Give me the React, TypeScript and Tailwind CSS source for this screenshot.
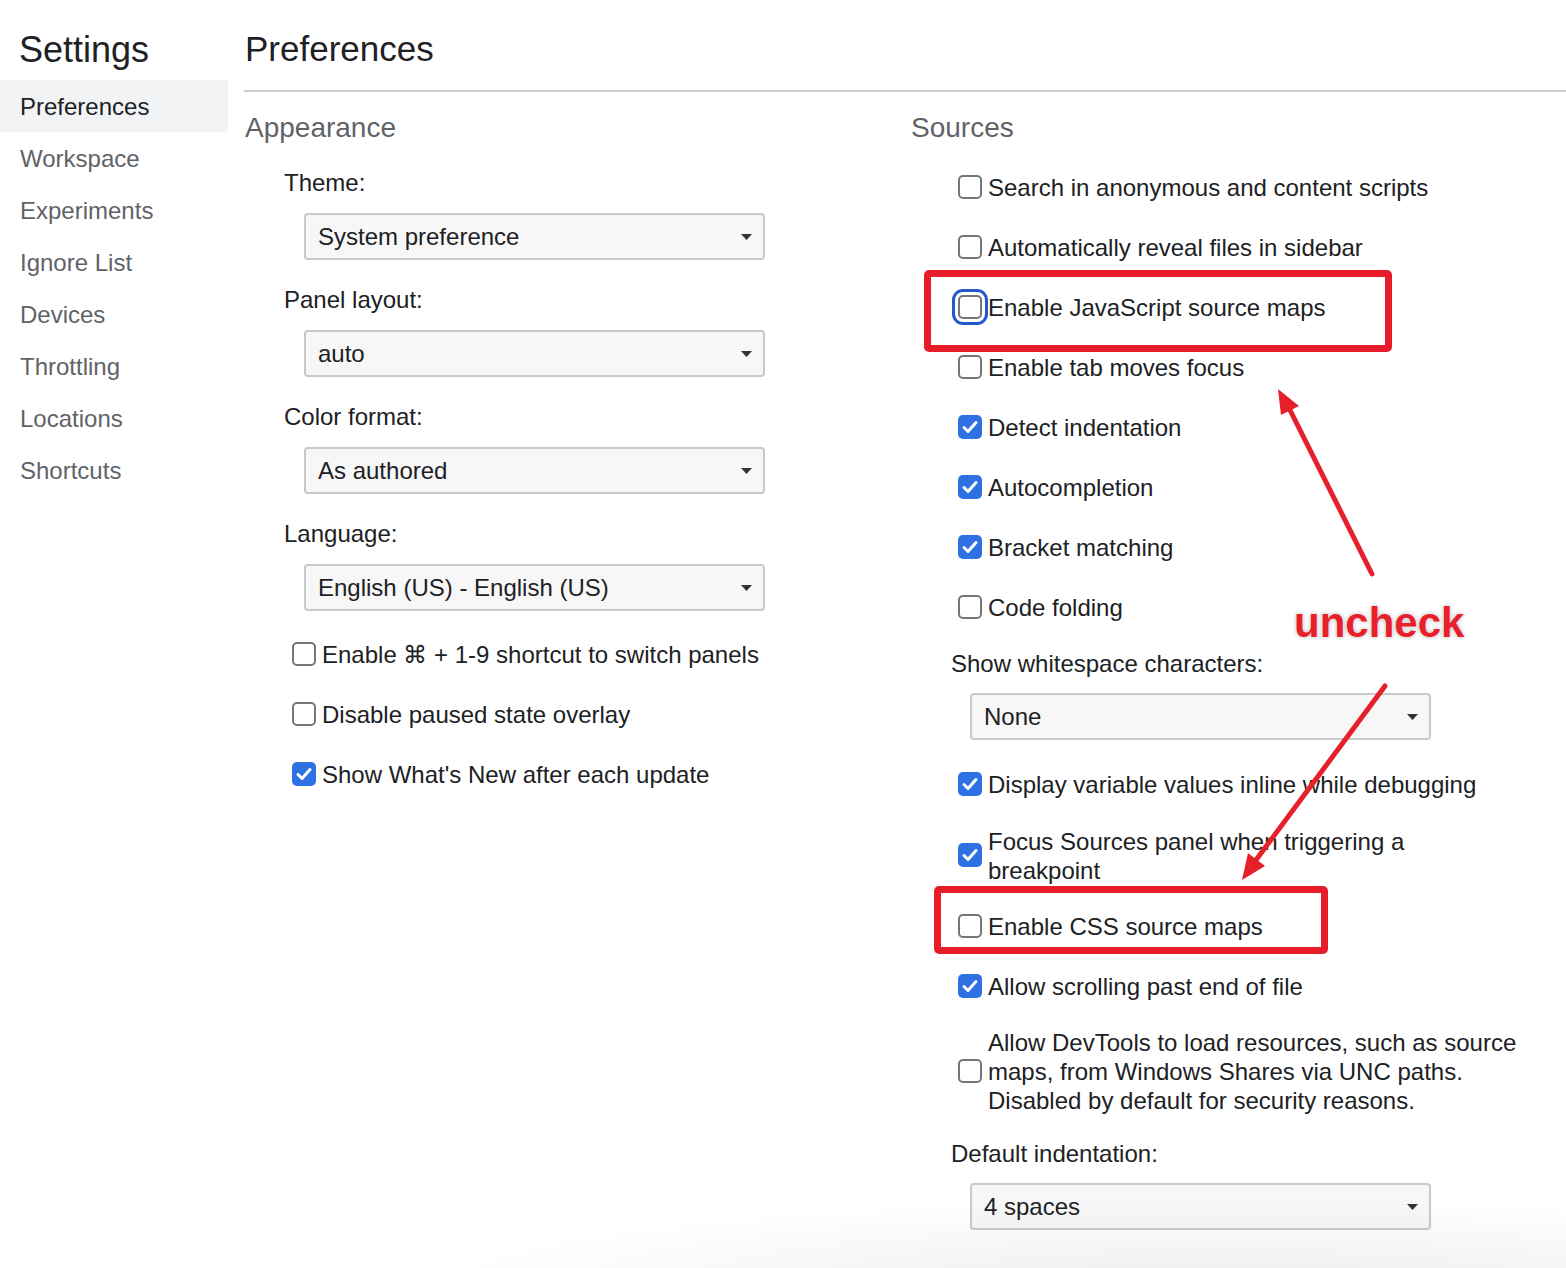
import React from "react";

function Check({ checked = false, focused = false }: { checked?: boolean; focused?: boolean }) {
  return (
    <span
      className={
        "flex h-[24px] w-[24px] shrink-0 items-center justify-center rounded-[5px] " +
        (checked ? "bg-[#2f71e3]" : "border-2 border-[#767676] bg-white") +
        (focused ? " outline-3 outline-offset-3 outline-[#2459cc]" : "")
      }
    >
      {checked && (
        <svg width="24" height="24" viewBox="0 0 24 24">
          <path d="M6 12.5 L10 16.5 L18 7.5" fill="none" stroke="#fff" strokeWidth="3" strokeLinecap="round" strokeLinejoin="round" />
        </svg>
      )}
    </span>
  );
}

function Row({
  children,
  checked = false,
  focused = false,
  indent,
  h = "h-[60px]",
}: {
  children: React.ReactNode;
  checked?: boolean;
  focused?: boolean;
  indent: string;
  h?: string;
}) {
  return (
    <div className={`flex items-center gap-[6px] ${indent} ${h}`}>
      <Check checked={checked} focused={focused} />
      <span className="whitespace-nowrap pt-[1px] leading-[29px]">{children}</span>
    </div>
  );
}

function Select({ value, indent }: { value: string; indent: string }) {
  return (
    <div
      className={`${indent} flex h-[47px] w-[461px] items-center justify-between rounded-[4px] border-2 border-[#c9c9c9] bg-[#f7f7f7] pl-[12px] pr-[11px]`}
    >
      <span className="pt-[1px]">{value}</span>
      <svg width="11" height="6" viewBox="0 0 11 6">
        <polygon points="0,0 11,0 5.5,6" fill="#333" />
      </svg>
    </div>
  );
}

function Label({ children, cls = "" }: { children: React.ReactNode; cls?: string }) {
  return <div className={`flex h-[40px] items-center pl-[40px] pt-[2px] ${cls}`}>{children}</div>;
}

export default function App() {
  const nav = ["Preferences", "Workspace", "Experiments", "Ignore List", "Devices", "Throttling", "Locations", "Shortcuts"];
  return (
    <div className="relative flex h-[1268px] w-[1566px] overflow-hidden bg-white font-['Liberation_Sans',Arial,sans-serif] text-[24px] text-[#202124]">
      <aside className="w-[228px] shrink-0">
        <div className="flex h-[80px] items-center pl-[19px] pt-[19px] text-[36px] text-[#202124]">Settings</div>
        <nav className="flex flex-col">
          {nav.map((n, i) => (
            <div
              key={n}
              className={
                "flex h-[52px] items-center pl-[20px] pt-[2px] " +
                (i === 0 ? "bg-[#f1f3f4] text-[#202124]" : "text-[#5f6368]")
              }
            >
              {n}
            </div>
          ))}
        </nav>
      </aside>

      <main className="flex flex-1 flex-col pl-[16px]">
        <header className="flex h-[92px] items-center border-b-2 border-[#cbcdd1] pt-[9px] text-[35px]">
          <span className="pl-[1px]">Preferences</span>
        </header>
        <div className="flex">
          <section className="flex w-[667px] shrink-0 flex-col">
            <div className="flex h-[70px] items-center pl-[1px] pt-[2px] text-[28px] text-[#5f6368]">Appearance</div>

            <Label>Theme:</Label>
            <div className="mt-[11px] mb-[19px]">
              <Select value="System preference" indent="ml-[60px]" />
            </div>
            <Label>Panel layout:</Label>
            <div className="mt-[11px] mb-[19px]">
              <Select value="auto" indent="ml-[60px]" />
            </div>
            <Label>Color format:</Label>
            <div className="mt-[11px] mb-[19px]">
              <Select value="As authored" indent="ml-[60px]" />
            </div>
            <Label>Language:</Label>
            <div className="mt-[11px] mb-[13px]">
              <Select value="English (US) - English (US)" indent="ml-[60px]" />
            </div>

            <Row indent="pl-[48px]">Enable ⌘ + 1-9 shortcut to switch panels</Row>
            <Row indent="pl-[48px]">Disable paused state overlay</Row>
            <Row indent="pl-[48px]" checked>
              Show What's New after each update
            </Row>
          </section>

          <section className="flex flex-1 flex-col">
            <div className="flex h-[70px] items-center pt-[2px] text-[28px] text-[#5f6368]">Sources</div>
            <div className="-mt-[5px] flex flex-col">
              <Row indent="pl-[47px]">Search in anonymous and content scripts</Row>
              <Row indent="pl-[47px]">Automatically reveal files in sidebar</Row>
              <Row indent="pl-[47px]" focused>
                Enable JavaScript source maps
              </Row>
              <Row indent="pl-[47px]">Enable tab moves focus</Row>
              <Row indent="pl-[47px]" checked>
                Detect indentation
              </Row>
              <Row indent="pl-[47px]" checked>
                Autocompletion
              </Row>
              <Row indent="pl-[47px]" checked>
                Bracket matching
              </Row>
              <Row indent="pl-[47px]">Code folding</Row>
            </div>
            <Label cls="mt-[6px]">Show whitespace characters:</Label>
            <div className="mt-[10px]">
              <Select value="None" indent="ml-[59px]" />
            </div>
            <div className="mt-[14px]">
              <Row indent="pl-[47px]" checked>
                Display variable values inline while debugging
              </Row>
            </div>
            <Row indent="pl-[47px]" checked h="h-[82px]">
              Focus Sources panel when triggering a
              <br />
              breakpoint
            </Row>
            <Row indent="pl-[47px]">Enable CSS source maps</Row>
            <Row indent="pl-[47px]" checked>
              Allow scrolling past end of file
            </Row>
            <Row indent="pl-[47px]" h="h-[110px]">
              Allow DevTools to load resources, such as source
              <br />
              maps, from Windows Shares via UNC paths.
              <br />
              Disabled by default for security reasons.
            </Row>
            <Label cls="mt-[7px]">Default indentation:</Label>
            <div className="mt-[10px]">
              <Select value="4 spaces" indent="ml-[59px]" />
            </div>
          </section>
        </div>
      </main>

      {/* bottom window shadow */}
      <div className="pointer-events-none absolute bottom-0 left-[420px] right-0 h-[70px] bg-[radial-gradient(ellipse_at_70%_120%,rgba(0,0,0,0.07),rgba(0,0,0,0)_70%)]" />

      {/* annotation boxes */}
      <div className="pointer-events-none absolute left-[924px] top-[270px] h-[82px] w-[468px] rounded-[5px] border-[7px] border-[#e81d2a]" />
      <div className="pointer-events-none absolute left-[934px] top-[886px] h-[68px] w-[394px] rounded-[5px] border-[7px] border-[#e81d2a]" />

      {/* arrows */}
      <svg className="pointer-events-none absolute left-0 top-0" width="1566" height="1268" viewBox="0 0 1566 1268">
        <line x1="1372" y1="574" x2="1290" y2="410" stroke="#e5202b" strokeWidth="5" strokeLinecap="round" />
        <polygon points="1278,389 1299,406 1281,415" fill="#e5202b" />
        <line x1="1385" y1="686" x2="1256" y2="860" stroke="#e5202b" strokeWidth="5" strokeLinecap="round" />
        <polygon points="1242,880 1265,866 1248,853" fill="#e5202b" />
      </svg>

      <div className="pointer-events-none absolute left-[1294px] top-[602px] text-[42px] font-bold leading-none text-[#e8202b] [text-shadow:0_0_2px_#fff,0_0_4px_rgba(0,0,0,0.35)]">
        uncheck
      </div>
    </div>
  );
}
